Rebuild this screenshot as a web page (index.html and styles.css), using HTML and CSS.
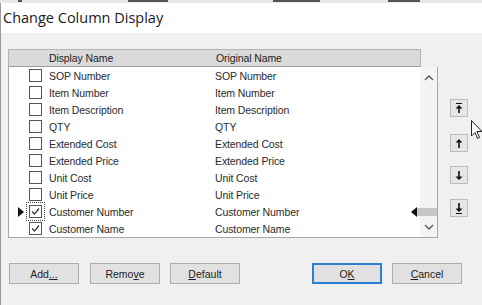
FILE: index.html
```html
<!DOCTYPE html>
<html>
<head>
<meta charset="utf-8">
<link rel="stylesheet" href="styles.css">
</head>
<body>
<div class="bgstrip"><span class="frag f1"></span><span class="frag f2"></span><span class="frag f3"></span><span class="frag f4"></span></div>
<div class="window">
  <div class="titlebar">Change Column Display</div>
  <div class="content">
    <div class="main">
      <div class="grid">
        <div class="header">
          <span class="col1">Display Name</span>
          <span class="col2">Original Name</span>
        </div>
        <div class="gbody">
          <div class="rows">
            <div class="row"><span class="ind"></span><span class="cb"></span><span class="col1">SOP Number</span><span class="col2">SOP Number</span></div>
            <div class="row"><span class="ind"></span><span class="cb"></span><span class="col1">Item Number</span><span class="col2">Item Number</span></div>
            <div class="row"><span class="ind"></span><span class="cb"></span><span class="col1">Item Description</span><span class="col2">Item Description</span></div>
            <div class="row"><span class="ind"></span><span class="cb"></span><span class="col1">QTY</span><span class="col2">QTY</span></div>
            <div class="row"><span class="ind"></span><span class="cb"></span><span class="col1">Extended Cost</span><span class="col2">Extended Cost</span></div>
            <div class="row"><span class="ind"></span><span class="cb"></span><span class="col1">Extended Price</span><span class="col2">Extended Price</span></div>
            <div class="row"><span class="ind"></span><span class="cb"></span><span class="col1">Unit Cost</span><span class="col2">Unit Cost</span></div>
            <div class="row"><span class="ind"></span><span class="cb"></span><span class="col1">Unit Price</span><span class="col2">Unit Price</span></div>
            <div class="row current"><span class="ind"><svg width="6" height="10" viewBox="0 0 6 10"><path d="M0 0 L6 5 L0 10 Z" fill="#111"/></svg></span><span class="cbwrap focus"><span class="cb checked"><svg width="11" height="11" viewBox="0 0 11 11"><path d="M2 5.5 L4.5 8 L9 2.5" fill="none" stroke="#333" stroke-width="1.2"/></svg></span></span><span class="col1">Customer Number</span><span class="col2">Customer Number</span><span class="marker"><svg width="6" height="10" viewBox="0 0 6 10"><path d="M6 0 L0 5 L6 10 Z" fill="#111"/></svg></span></div>
            <div class="row"><span class="ind"></span><span class="cb checked"><svg width="11" height="11" viewBox="0 0 11 11"><path d="M2 5.5 L4.5 8 L9 2.5" fill="none" stroke="#333" stroke-width="1.2"/></svg></span><span class="col1">Customer Name</span><span class="col2">Customer Name</span></div>
          </div>
          <div class="scroll">
            <svg class="chev" width="10" height="6" viewBox="0 0 10 6"><path d="M1 5 L5 1 L9 5" fill="none" stroke="#555" stroke-width="1.3"/></svg>
            <span class="thumb"></span>
            <svg class="chev" width="10" height="6" viewBox="0 0 10 6"><path d="M1 1 L5 5 L9 1" fill="none" stroke="#555" stroke-width="1.3"/></svg>
          </div>
        </div>
      </div>
      <div class="side">
        <button class="sbtn b1"><svg width="8" height="11" viewBox="0 0 8 11"><path d="M1 0.5 H7" stroke="#111" stroke-width="1"/><path d="M4 2 L7.5 5.5 H4.8 V10 H3.2 V5.5 H0.5 Z" fill="#111"/></svg></button>
        <button class="sbtn b2"><svg width="8" height="11" viewBox="0 0 8 11"><path d="M4 1 L7.5 4.5 H4.8 V10 H3.2 V4.5 H0.5 Z" fill="#111"/></svg></button>
        <button class="sbtn b3"><svg width="8" height="11" viewBox="0 0 8 11"><path d="M4 10 L7.5 6.5 H4.8 V1 H3.2 V6.5 H0.5 Z" fill="#111"/></svg></button>
        <button class="sbtn b4"><svg width="8" height="11" viewBox="0 0 8 11"><path d="M4 9 L7.5 5.5 H4.8 V0 H3.2 V5.5 H0.5 Z" fill="#111"/><path d="M1 10.5 H7" stroke="#111" stroke-width="1"/></svg></button>
      </div>
    </div>
    <div class="buttons">
      <button class="btn">Add<u>...</u></button>
      <button class="btn">Remo<u>v</u>e</button>
      <button class="btn"><u>D</u>efault</button>
      <span class="spacer"></span>
      <button class="btn ok">O<u>K</u></button>
      <button class="btn"><u>C</u>ancel</button>
    </div>
  </div>
</div>
<svg class="cursor" width="12" height="20" viewBox="0 0 12 20"><path d="M0.5 0.5 V16 L4 12.5 L6.5 18.5 L8.5 17.5 L6 11.5 H11 Z" fill="#fff" stroke="#222" stroke-width="1"/></svg>
</body>
</html>
```
FILE: styles.css
```css
html, body {
  margin: 0;
  padding: 0;
  width: 482px;
  height: 305px;
  overflow: hidden;
  background: #f0f0f0;
  font-family: "Liberation Sans", Arial, sans-serif;
}
.bgstrip {
  height: 3px;
  background: #e8e8e8;
  position: relative;
  overflow: hidden;
}
.frag {
  position: absolute;
  top: 0;
  height: 2px;
  background: #555;
}
.f1 { left: 128px; width: 40px; }
.f2 { left: 273px; width: 47px; }
.f3 { left: 388px; width: 32px; }
.f4 { left: 18px; width: 4px; }
.window {
  height: 302px;
  display: flex;
  flex-direction: column;
  border-left: 1px solid #9a9a9a;
  box-sizing: border-box;
}
.titlebar {
  height: 30px;
  background: #fff;
  font-family: "Segoe UI", "Open Sans", "Noto Sans", sans-serif;
  font-size: 14.5px;
  color: #1a1a1a;
  line-height: 30px;
  padding-left: 2px;
  flex: none;
}
.content {
  flex: 1;
  display: flex;
  flex-direction: column;
  padding: 16px 0 0 7px;
}
.main {
  display: flex;
}
.grid {
  width: 430px;
  display: flex;
  flex-direction: column;
}
.header {
  width: 411px;
  height: 16px;
  background: #dadada;
  border: 1px solid #b4b4b4;
  border-bottom: 1px solid #9c9c9c;
  display: flex;
  align-items: center;
  font-size: 10.5px;
  letter-spacing: -0.1px;
  color: #222;
}
.header .col1 { margin-left: 40px; width: 167px; }
.gbody {
  height: 170px;
  border: 1px solid #a8a8a8;
  border-top: none;
  background: #fff;
  display: flex;
}
.rows {
  flex: 1;
  display: flex;
  flex-direction: column;
}
.row {
  height: 17px;
  display: flex;
  align-items: center;
  font-size: 10.5px;
  letter-spacing: -0.1px;
  color: #2a2a2a;
  position: relative;
}
.ind {
  width: 20px;
  display: flex;
  justify-content: center;
  padding-left: 3px;
  box-sizing: border-box;
}
.cbwrap {
  display: flex;
  align-items: center;
  justify-content: center;
}
.focus {
  outline: 1px dotted #444;
  margin-left: -2px;
  margin-right: -2px;
  padding: 2px;
}
.cb {
  width: 11px;
  height: 11px;
  border: 1px solid #555;
  background: #fff;
  display: flex;
  align-items: center;
  justify-content: center;
}
.row .col1 { margin-left: 7px; width: 166px; }
.marker {
  position: absolute;
  right: 3px;
  top: 4px;
}
.scroll {
  width: 17px;
  background: #f4f4f4;
  display: flex;
  flex-direction: column;
  align-items: center;
  justify-content: space-between;
  padding: 8px 0 7px;
  box-sizing: border-box;
  position: relative;
}
.thumb {
  position: absolute;
  left: -3px;
  right: 0;
  top: 141px;
  height: 8px;
  background: #c6c6c6;
}
.side {
  display: flex;
  flex-direction: column;
  margin-left: 12px;
  padding-top: 50px;
}
.sbtn {
  width: 18px;
  height: 18px;
  padding: 0;
  border: 1px solid #bcbcbc;
  background: #e6e6e6;
  display: flex;
  align-items: center;
  justify-content: center;
}
.b2 { margin-top: 17px; }
.b3 { margin-top: 14px; }
.b4 { margin-top: 15px; }
.buttons {
  display: flex;
  margin-top: 25px;
  padding-left: 1px;
}
.btn {
  width: 70px;
  height: 21px;
  padding: 0;
  border: 1px solid #adadad;
  background: #e1e1e1;
  font-family: "Liberation Sans", Arial, sans-serif;
  font-size: 10.5px;
  color: #222;
  margin-right: 10px;
}
.btn:first-child { margin-right: 11px; }
.spacer { width: 62px; }
.ok {
  border: 2px solid #2a7fd4;
}
.cursor {
  position: absolute;
  left: 471px;
  top: 120px;
}
```
